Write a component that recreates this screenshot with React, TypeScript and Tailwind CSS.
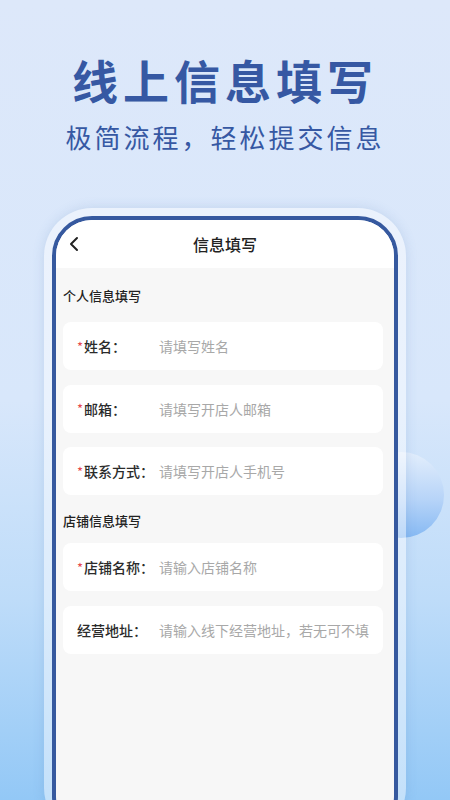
import React from 'react';
import { ChevronLeft } from 'lucide-react';

const FONT = { fontFamily: '"Noto Sans CJK SC", "Noto Sans", sans-serif' };

interface Field {
  label: string;
  placeholder: string;
  required?: boolean;
}

const personal: Field[] = [
  { label: '姓名：', placeholder: '请填写姓名', required: true },
  { label: '邮箱：', placeholder: '请填写开店人邮箱', required: true },
  { label: '联系方式：', placeholder: '请填写开店人手机号', required: true },
];

const shop: Field[] = [
  { label: '店铺名称：', placeholder: '请输入店铺名称', required: true },
  { label: '经营地址：', placeholder: '请输入线下经营地址，若无可不填' },
];

function FieldCard({ field, gap }: { field: Field; gap: string }) {
  return (
    <div className={'flex h-12 items-center rounded-lg bg-white pl-[14px] ' + gap}>
      <div className="flex w-[82px] items-center text-[14px] font-medium leading-none text-[#2b2b2b]">
        {field.required && <span className="mr-[1px] text-[13px] font-normal text-[#e5484d]">*</span>}
        <span>{field.label}</span>
      </div>
      <span className="text-[14px] leading-none text-[#a8a8a8]">{field.placeholder}</span>
    </div>
  );
}

export default function App() {
  return (
    <div
      className="relative h-[800px] w-[450px] overflow-hidden bg-[linear-gradient(180deg,#dde8fa_0%,#d8e7fb_50%,#bedcf9_75%,#93c8f6_100%)]"
      style={FONT}
    >
      {/* decorative sphere behind the phone */}
      <div className="absolute left-[358px] top-[452px] h-[86px] w-[86px] rounded-full bg-[linear-gradient(180deg,#e3eefc_0%,#b7d4f8_55%,#86b9f3_100%)]" />

      <div className="relative flex flex-col items-center pt-[54px]">
        <h1 className="text-[46px] font-bold leading-[50px] tracking-[5px] text-[#3658a3]">线上信息填写</h1>
        <p className="mt-[18px] text-[26px] font-normal leading-[30px] tracking-[3px] text-[#3658a3]">
          极简流程，轻松提交信息
        </p>
      </div>

      <div className="relative ml-[44px] mt-[56px] w-[362px] rounded-[48px] bg-white/45 px-[8px] pt-[8px] shadow-[0_0_12px_rgba(80,120,180,0.18)]">
        <div className="h-[620px] overflow-hidden rounded-[40px] border-4 border-[#36599f] bg-[#f7f7f7]">
          <div className="grid h-12 grid-cols-[48px_1fr_48px] items-center bg-white">
            <ChevronLeft className="ml-[6px] h-6 w-6 text-[#222]" strokeWidth={2} />
            <span className="text-center text-[16px] font-medium text-[#222]">信息填写</span>
            <span />
          </div>

          <div className="pl-[7px] pr-[11px]">
            <div className="pt-[20px] text-[13px] font-medium leading-4 text-[#222]">个人信息填写</div>
            {personal.map((f, i) => (
              <FieldCard key={f.label} field={f} gap={i === 0 ? 'mt-[18px]' : 'mt-[14.5px]'} />
            ))}
            <div className="mt-[18px] text-[13px] font-medium leading-4 text-[#222]">店铺信息填写</div>
            {shop.map((f, i) => (
              <FieldCard key={f.label} field={f} gap={i === 0 ? 'mt-[14px]' : 'mt-[15px]'} />
            ))}
          </div>
        </div>
      </div>
    </div>
  );
}
